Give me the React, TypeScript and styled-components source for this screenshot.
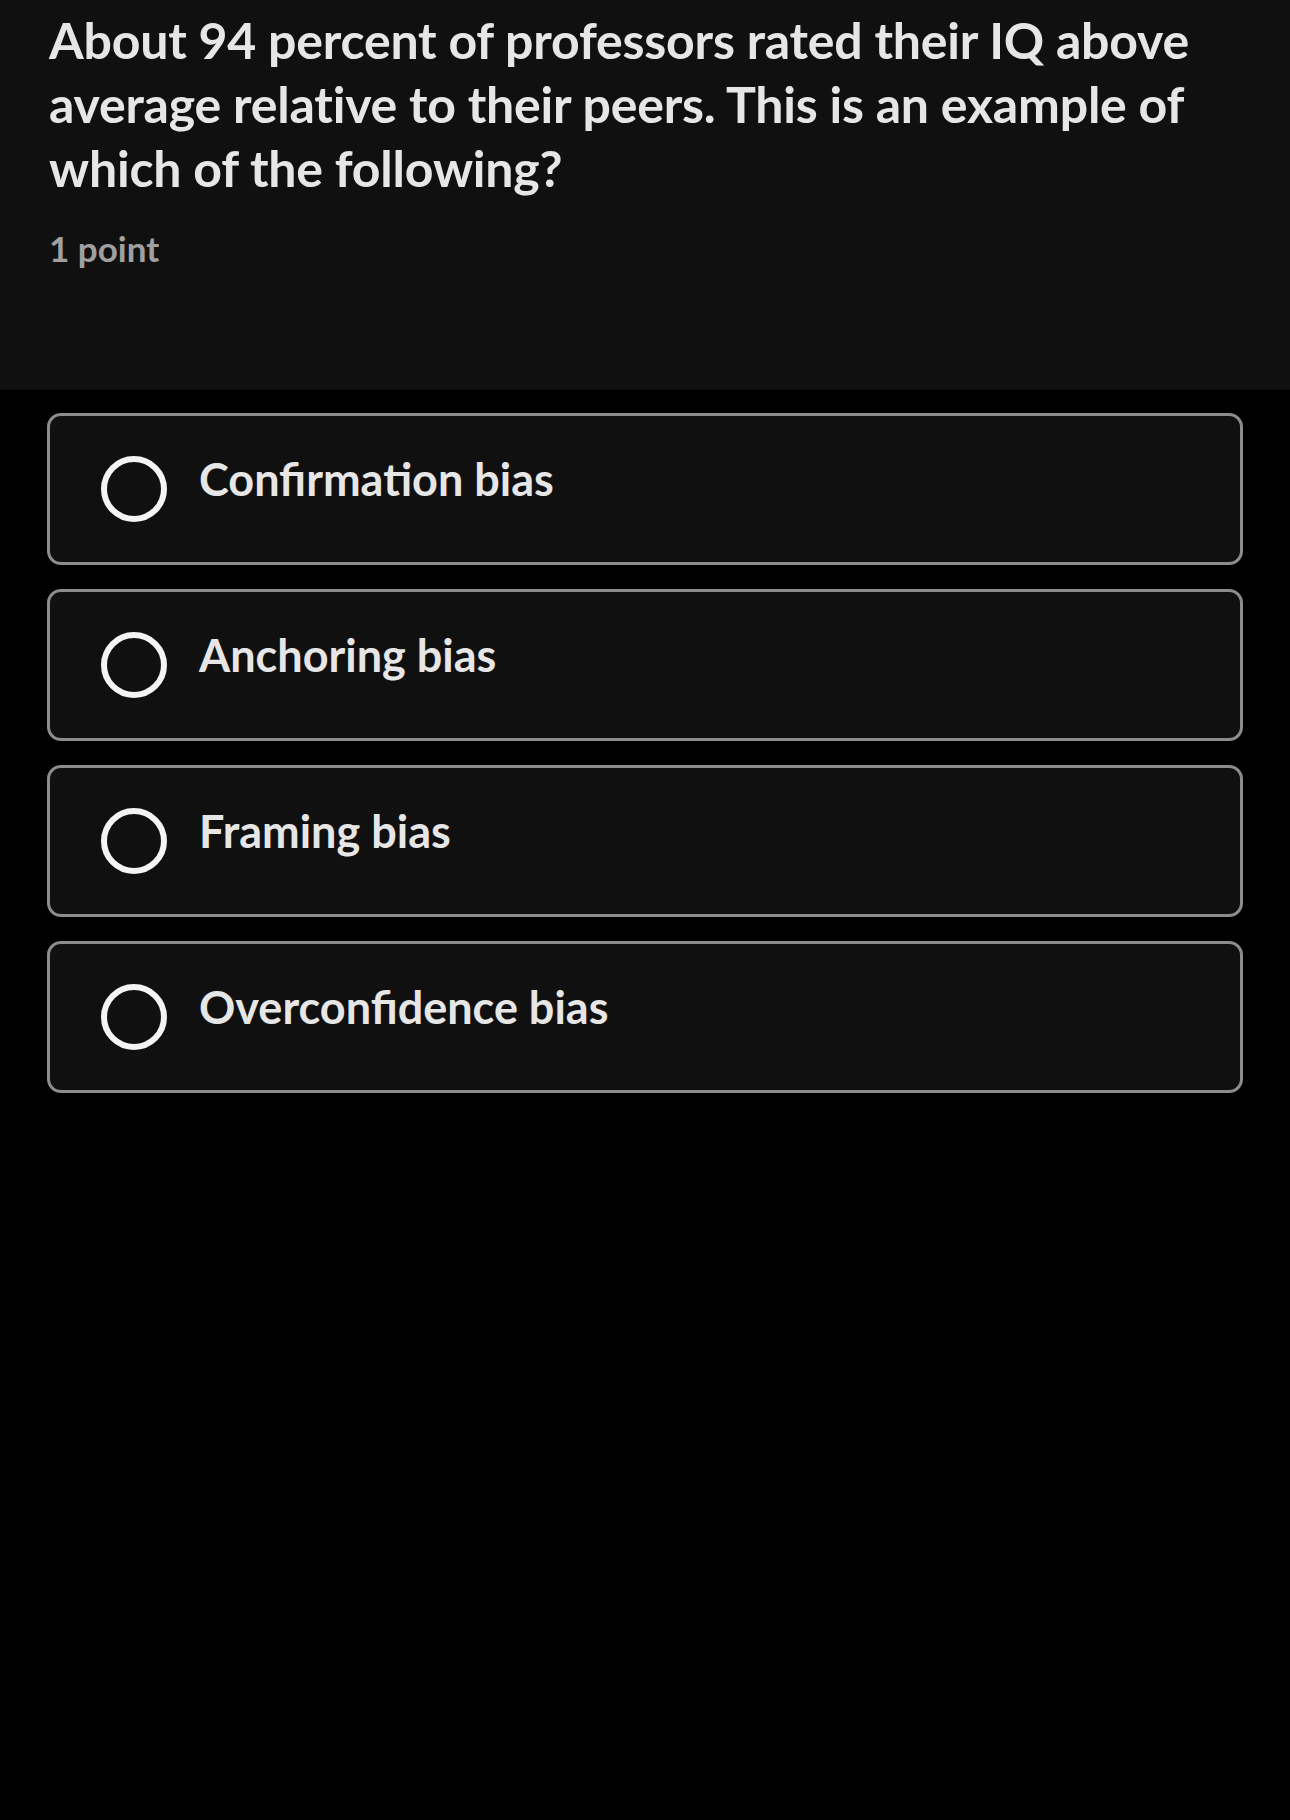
import styled, { createGlobalStyle } from 'styled-components'

const GlobalStyle = createGlobalStyle`
    html, body {
        margin: 0;
        padding: 0;
        background: #000;
    }
    body {
        font-family: Lato, "Noto Sans", sans-serif;
        -webkit-font-smoothing: antialiased;
    }
`

const Page = styled.div`
    width: 1290px;
    min-height: 1820px;
    background: #000;
`

const QuestionHeader = styled.div`
    box-sizing: border-box;
    height: 390px;
    padding: 8px 48px 0 49px;
    background: #101010;
`

const QuestionTitle = styled.div`
    color: #e6e6e6;
    font-size: 50px;
    font-weight: 700;
    line-height: 64px;
    letter-spacing: -0.2px;
`

const PointLabel = styled.div`
    margin-top: 22px;
    color: #a0a0a0;
    font-size: 35px;
    font-weight: 700;
    line-height: 52px;
`

const OptionList = styled.div`
    display: flex;
    flex-direction: column;
    gap: 24px;
    padding: 23px 47px;
`

const OptionCard = styled.label`
    box-sizing: border-box;
    height: 152px;
    display: flex;
    align-items: center;
    padding-left: 51px;
    border: 3px solid #8c8c8c;
    border-radius: 14px;
    background: #101010;
    cursor: pointer;
`

const Radio = styled.span`
    box-sizing: border-box;
    flex: none;
    width: 66px;
    height: 66px;
    border: 6px solid #f4f4f4;
    border-radius: 50%;
`

const OptionText = styled.span`
    margin-left: 32px;
    padding-bottom: 20px;
    color: #e6e6e6;
    font-size: 45px;
    font-weight: 700;
    line-height: 56px;
`

const options = ['Confirmation bias', 'Anchoring bias', 'Framing bias', 'Overconfidence bias']

const App = () => {
    return (
        <Page>
            <GlobalStyle />
            <QuestionHeader>
                <QuestionTitle>
                    About 94 percent of professors rated their IQ above average relative to their peers. This is an example of which of the following?
                </QuestionTitle>
                <PointLabel>1 point</PointLabel>
            </QuestionHeader>
            <OptionList>
                {options.map((item) => (
                    <OptionCard key={item}>
                        <Radio />
                        <OptionText>{item}</OptionText>
                    </OptionCard>
                ))}
            </OptionList>
        </Page>
    )
}

export default App
